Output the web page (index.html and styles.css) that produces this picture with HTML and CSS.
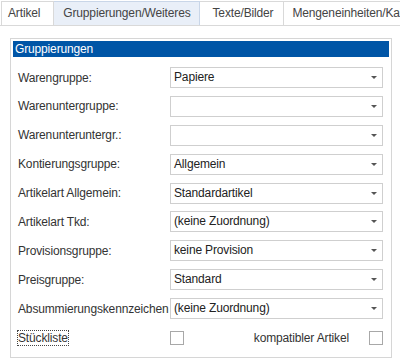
FILE: index.html
```html
<html>
<head>
    <title>Artikel</title>
    <link rel="stylesheet" href="styles.css">
</head>
<body>
    <div class="tabs">
        <div class="tab">Artikel</div>
        <div class="tab active">Gruppierungen/Weiteres</div>
        <div class="tab">Texte/Bilder</div>
        <div class="tab">Mengeneinheiten/Kalkulation</div>
    </div>
    <div class="page">
        <div class="group">
            <div class="group-title">Gruppierungen</div>
            <div class="rows">
                <div class="label">Warengruppe:</div>
                <div class="combo">Papiere<span class="arrow"></span></div>
                <div class="label">Warenuntergruppe:</div>
                <div class="combo"><span class="arrow"></span></div>
                <div class="label">Warenunteruntergr.:</div>
                <div class="combo"><span class="arrow"></span></div>
                <div class="label">Kontierungsgruppe:</div>
                <div class="combo">Allgemein<span class="arrow"></span></div>
                <div class="label">Artikelart Allgemein:</div>
                <div class="combo">Standardartikel<span class="arrow"></span></div>
                <div class="label">Artikelart Tkd:</div>
                <div class="combo">(keine Zuordnung)<span class="arrow"></span></div>
                <div class="label">Provisionsgruppe:</div>
                <div class="combo">keine Provision<span class="arrow"></span></div>
                <div class="label">Preisgruppe:</div>
                <div class="combo">Standard<span class="arrow"></span></div>
                <div class="label">Absummierungskennzeichen</div>
                <div class="combo">(keine Zuordnung)<span class="arrow"></span></div>
                <div class="label"><span class="focus">Stückliste</span></div>
                <div class="check-row">
                    <span class="check"></span>
                    <span class="check-label">kompatibler Artikel</span>
                    <span class="check"></span>
                </div>
            </div>
        </div>
    </div>
</body>
</html>
```

FILE: styles.css
```css
body {
    margin: 0;
    width: 400px;
    height: 364px;
    overflow: hidden;
    background-color: #ffffff;
    font-family: "Liberation Sans", Arial, sans-serif;
    font-size: 12px;
    letter-spacing: -0.15px;
    color: #333;
}
.tabs {
    display: flex;
    height: 24px;
    padding-top: 1px;
    border-bottom: 1px solid #d9d9d9;
    white-space: nowrap;
    overflow: hidden;
}
.tab {
    padding: 0 13px 0 6px;
    line-height: 23px;
    border: 1px solid #d9d9d9;
    border-bottom: none;
    border-left: none;
    color: #444;
}
.tab:first-child {
    margin-left: 1px;
    border-left: 1px solid #d9d9d9;
}
.tab.active {
    background-color: #e9eff8;
    border-color: #c9d6e8;
    padding: 0 8px 0 9px;
}
.tab:nth-child(3) {
    padding: 0 10px 0 13px;
}
.tab:nth-child(4) {
    padding-left: 8px;
}
.page {
    padding: 12px 8px 6px 10px;
}
.group {
    height: 320px;
    border: 1px solid #d6d6d6;
    box-sizing: border-box;
    padding: 2px 2px 0 2px;
}
.group-title {
    background-color: #0055a6;
    color: #fff;
    height: 16px;
    line-height: 16px;
    padding-left: 2px;
}
.rows {
    display: grid;
    grid-template-columns: 152px 213px;
    grid-auto-rows: 21px;
    row-gap: 7.9px;
    align-items: center;
    padding: 10px 0 0 5px;
}
.label {
    white-space: nowrap;
}
.combo {
    position: relative;
    height: 21px;
    box-sizing: border-box;
    border: 1px solid #cfcfcf;
    padding-left: 3px;
    line-height: 19px;
    color: #222;
}
.arrow {
    position: absolute;
    right: 5px;
    top: 8px;
    border-left: 3px solid transparent;
    border-right: 3px solid transparent;
    border-top: 3px solid #555;
}
.focus {
    outline: 1px dotted #444;
}
.check-row {
    display: flex;
    align-items: center;
}
.check {
    width: 14px;
    height: 14px;
    box-sizing: border-box;
    border: 1px solid #a8a8a8;
}
.check-label {
    flex: 1;
    text-align: right;
    padding-right: 20px;
}
```
